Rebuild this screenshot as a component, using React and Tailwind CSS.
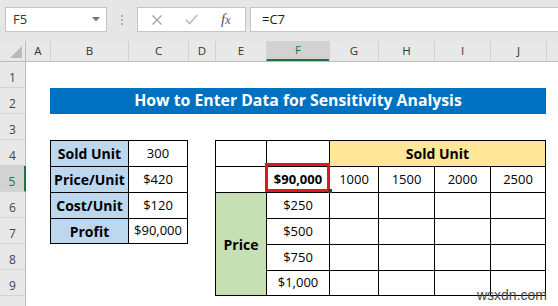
export default function App() {
  const rows = [1, 2, 3, 4, 5, 6, 7, 8, 9];
  return (
    <div className="relative w-[558px] h-[306px] overflow-hidden bg-white font-['Open_Sans',sans-serif] text-black">
      {/* Formula bar */}
      <div className="h-[41px] bg-[#e6e6e6] flex items-start pt-[7px]">
        <div className="ml-[5px] w-[102px] h-[25px] bg-white border border-[#c4c4c4] flex items-center justify-between pl-[7px] pr-[6px]">
          <span className="text-[13px] text-[#333]">F5</span>
          <svg width="8" height="5" viewBox="0 0 8 5">
            <path d="M0 0h8L4 4.5z" fill="#7a7a7a" />
          </svg>
        </div>
        <div className="w-[30px] h-[25px] flex flex-col items-center justify-center gap-[2px]">
          <span className="w-[2px] h-[2px] bg-[#b0b0b0]" />
          <span className="w-[2px] h-[2px] bg-[#b0b0b0]" />
          <span className="w-[2px] h-[2px] bg-[#b0b0b0]" />
        </div>
        <div className="w-[109px] h-[25px] bg-white border border-[#c4c4c4] flex items-center">
          <svg className="ml-[14px]" width="10" height="10" viewBox="0 0 10 10">
            <path d="M0.5 0.5L9.5 9.5M9.5 0.5L0.5 9.5" stroke="#a0a0a0" strokeWidth="1.2" fill="none" />
          </svg>
          <svg className="ml-[23px]" width="13" height="11" viewBox="0 0 13 11">
            <path d="M0.8 5.8L4.6 9.6L12.2 1" stroke="#bababa" strokeWidth="1.5" fill="none" />
          </svg>
          <span className="ml-[23px] italic font-['Liberation_Serif',serif] text-[15px] leading-none text-[#555]">
            f<span className="text-[12px]">x</span>
          </span>
        </div>
        <div className="ml-[4px] flex-1 h-[25px] bg-white border border-r-0 border-[#c4c4c4] flex items-center pl-[11px] text-[13px] text-[#222]">
          =C7
        </div>
      </div>

      {/* Column headers */}
      <div className="h-[21px] bg-[#e8e8e8] border-b border-[#bcbcbc] flex text-[11.5px] text-[#333]">
        <div className="w-[26px] border-r border-[#bcbcbc] flex items-end justify-end pr-[3px] pb-[3px]">
          <svg width="12" height="12" viewBox="0 0 12 12">
            <path d="M12 0V12H0z" fill="#b9b9b9" />
          </svg>
        </div>
        <div className="flex-1 grid grid-cols-[24px_78px_60px_27px_51px_63px_49px_56px_56px_56px_1fr]">
          <div className="flex items-center justify-center">A</div>
          <div className="border-l border-[#d2d2d2] flex items-center justify-center">B</div>
          <div className="border-l border-[#d2d2d2] flex items-center justify-center">C</div>
          <div className="border-l border-[#d2d2d2] flex items-center justify-center">D</div>
          <div className="border-l border-[#d2d2d2] flex items-center justify-center">E</div>
          <div className="border-l border-[#d2d2d2] bg-[#d2d2d2] border-b-2 border-b-[#217346] text-[#217346] flex items-center justify-center">F</div>
          <div className="border-l border-[#d2d2d2] flex items-center justify-center">G</div>
          <div className="border-l border-[#d2d2d2] flex items-center justify-center">H</div>
          <div className="border-l border-[#d2d2d2] flex items-center justify-center">I</div>
          <div className="border-l border-[#d2d2d2] flex items-center justify-center">J</div>
          <div className="border-l border-[#d2d2d2]" />
        </div>
      </div>

      {/* Body */}
      <div className="flex">
        <div className="w-[26px] flex flex-col bg-[#e8e8e8] text-[12px] leading-none text-[#444]">
          {rows.map((n) =>
            n === 5 ? (
              <div key={n} className="h-[26px] shrink-0 bg-[#d2d2d2] border-b border-[#d4d4d4] border-r-2 border-r-[#217346] text-[#217346] flex items-end justify-center pb-[3px]">
                {n}
              </div>
            ) : (
              <div key={n} className="h-[26px] shrink-0 border-b border-[#d4d4d4] border-r border-r-[#bcbcbc] flex items-end justify-center pb-[3px]">
                {n}
              </div>
            )
          )}
          <div className="h-[26px] shrink-0 border-r border-r-[#bcbcbc]" />
        </div>

        <div className="flex-1 grid grid-cols-[24px_78px_60px_27px_51px_63px_49px_56px_56px_56px_1fr] grid-rows-[repeat(9,26px)]">
          <div className="col-start-2 col-end-11 row-start-2 bg-[#0070c0] text-white font-bold text-[15.8px] flex items-center justify-center">
            How to Enter Data for Sensitivity Analysis
          </div>

          <div className="col-start-2 col-end-4 row-start-4 row-end-8 grid grid-cols-[77px_1fr] grid-rows-[25px_25px_25px_1fr] gap-px bg-black p-px text-[13px]">
            <div className="bg-[#bdd7ee] font-bold text-[14px] flex items-center justify-center">Sold Unit</div>
            <div className="bg-white flex items-center justify-center">300</div>
            <div className="bg-[#bdd7ee] font-bold text-[14px] flex items-center justify-center">Price/Unit</div>
            <div className="bg-white flex items-center justify-center">$420</div>
            <div className="bg-[#bdd7ee] font-bold text-[14px] flex items-center justify-center">Cost/Unit</div>
            <div className="bg-white flex items-center justify-center">$120</div>
            <div className="bg-[#bdd7ee] font-bold text-[14px] flex items-center justify-center">Profit</div>
            <div className="bg-white flex items-center justify-center">$90,000</div>
          </div>

          <div className="col-start-5 col-end-11 row-start-4 row-end-10 grid grid-cols-[50px_62px_48px_55px_55px_1fr] grid-rows-[25px_25px_25px_25px_25px_1fr] gap-px bg-black p-px text-[13px]">
            <div className="bg-white" />
            <div className="bg-white" />
            <div className="col-span-4 bg-[#ffe699] font-bold text-[14px] flex items-center justify-center">Sold Unit</div>

            <div className="bg-white" />
            <div className="relative bg-white font-bold flex items-center justify-center">
              $90,000
              <div className="absolute z-10 -left-[2px] -top-[4px] w-[65px] h-[29px] border-[3px] border-[#e3161c]" />
              <div className="absolute z-20 left-[61px] top-[22px] w-[4px] h-[4px] bg-[#3d3d3d]" />
            </div>
            <div className="bg-white flex items-center justify-center">1000</div>
            <div className="bg-white flex items-center justify-center">1500</div>
            <div className="bg-white flex items-center justify-center">2000</div>
            <div className="bg-white flex items-center justify-center">2500</div>

            <div className="row-span-4 bg-[#c6e0b4] font-bold text-[14px] flex items-center justify-center">Price</div>
            <div className="bg-white flex items-center justify-center">$250</div>
            <div className="bg-white" />
            <div className="bg-white" />
            <div className="bg-white" />
            <div className="bg-white" />

            <div className="bg-white flex items-center justify-center">$500</div>
            <div className="bg-white" />
            <div className="bg-white" />
            <div className="bg-white" />
            <div className="bg-white" />

            <div className="bg-white flex items-center justify-center">$750</div>
            <div className="bg-white" />
            <div className="bg-white" />
            <div className="bg-white" />
            <div className="bg-white" />

            <div className="bg-white flex items-center justify-center">$1,000</div>
            <div className="bg-white" />
            <div className="bg-white" />
            <div className="bg-white" />
            <div className="bg-white" />
          </div>
        </div>
      </div>

      <div className="absolute right-[11px] bottom-[4px] font-['Liberation_Sans',sans-serif] text-[14px] leading-none text-[#4a4a4a]">
        wsxdn.com
      </div>
    </div>
  );
}
